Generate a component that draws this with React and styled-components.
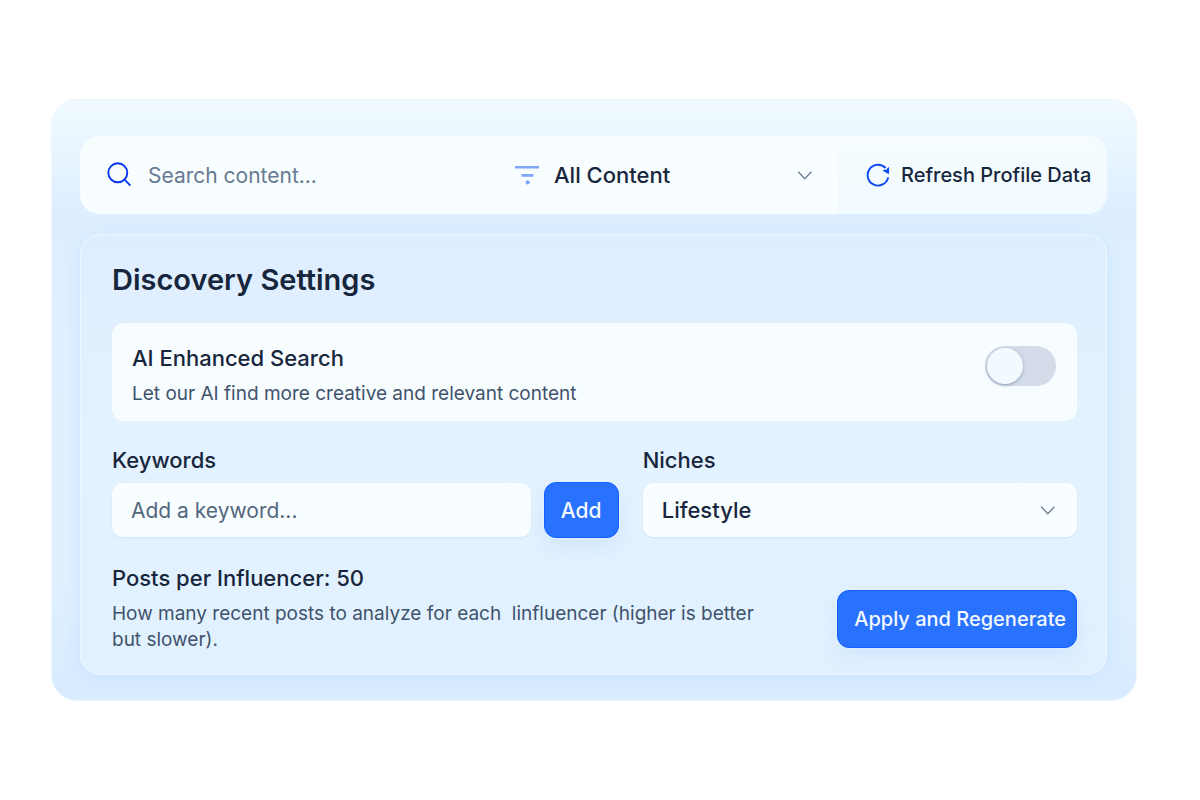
import React, { useState } from 'react'
import styled, { createGlobalStyle } from 'styled-components'

const SearchIcon = () => (
  <Icon width="25" height="26" viewBox="0 0 25 26" stroke="#0a36f0" strokeWidth="1.9">
    <circle cx="10.8" cy="10.8" r="9.5" />
    <path d="M17.6 17.6L23.4 23.6" />
  </Icon>
)

const FilterIcon = () => (
  <Icon width="24" height="20" viewBox="0 0 24 20" stroke="#7ea6fb" strokeWidth="2.6">
    <path d="M0 2.2H24M6.5 10.4H18.5" />
    <circle cx="12.7" cy="17.4" r="2.1" fill="#7ea6fb" stroke="none" />
  </Icon>
)

const RefreshIcon = () => (
  <Icon width="24" height="24" viewBox="0 0 24 24" stroke="#0a48f5" strokeWidth="1.9">
    <path d="M22.2 14.4A10.4 10.4 0 1 1 19.6 5" />
    <path d="M22.6 4.6V10.6L17 7.4L20.4 7.2Z" fill="#0a48f5" strokeWidth="1" />
  </Icon>
)

const ChevronIcon = () => (
  <Icon width="16" height="10" viewBox="0 0 16 10" stroke="#6b7f96" strokeWidth="1.3">
    <path d="M1.2 1.7L7.8 8.7L14.4 1.7" />
  </Icon>
)

const App = () => {
  const [enhanced, setEnhanced] = useState(false)
  const [keyword, setKeyword] = useState('')

  return (
    <Page>
      <GlobalStyle />
      <Panel>
        <Toolbar>
          <SearchField>
            <SearchIcon />
            <SearchInput type="search" placeholder="Search content..." aria-label="Search content" />
          </SearchField>
          <FilterField>
            <FilterIcon />
            <Select aria-label="Filter content">
              <option>All Content</option>
            </Select>
            <ChevronIcon />
          </FilterField>
          <RefreshButton type="button">
            <RefreshIcon />
            Refresh Profile Data
          </RefreshButton>
        </Toolbar>

        <Card>
          <Title>Discovery Settings</Title>

          <ToggleRow>
            <div>
              <Label as="label" htmlFor="enhanced">AI Enhanced Search</Label>
              <Hint>Let our AI find more creative and relevant content</Hint>
            </div>
            <Switch
              id="enhanced"
              type="checkbox"
              role="switch"
              checked={enhanced}
              onChange={e => setEnhanced(e.target.checked)}
            />
          </ToggleRow>

          <Fields>
            <div>
              <Label as="label" htmlFor="keyword">Keywords</Label>
              <KeywordRow>
                <KeywordInput
                  id="keyword"
                  type="text"
                  placeholder="Add a keyword..."
                  value={keyword}
                  onChange={e => setKeyword(e.target.value)}
                />
                <AddButton type="button">Add</AddButton>
              </KeywordRow>
            </div>
            <div>
              <Label as="label" htmlFor="niche">Niches</Label>
              <SelectBox>
                <Select id="niche">
                  <option>Lifestyle</option>
                </Select>
                <ChevronIcon />
              </SelectBox>
            </div>
          </Fields>

          <Footer>
            <Posts>
              <Label>Posts per Influencer: 50</Label>
              <Hint>
                {'How many recent posts to analyze for each  linfluencer (higher is better but slower).'}
              </Hint>
            </Posts>
            <ApplyButton type="button">Apply and Regenerate</ApplyButton>
          </Footer>
        </Card>
      </Panel>
    </Page>
  )
}

export default App

const GlobalStyle = createGlobalStyle`
  * {
    box-sizing: border-box;
  }

  body {
    margin: 0;
    background: #ffffff;
    color: #17263c;
    font-family: Inter, 'Liberation Sans', sans-serif;
  }

  input,
  select,
  button {
    margin: 0;
    font-family: inherit;
    color: inherit;
  }
`

const Icon = styled.svg`
  display: block;
  flex: none;
  fill: none;
  pointer-events: none;
`

const Page = styled.main`
  padding: 99px 63px 99px 51px;
`

const Panel = styled.section`
  display: flex;
  flex-direction: column;
  gap: 20px;
  padding: 36px 29px 25px 28px;
  border: 1px solid #ebf7ff;
  border-radius: 26px;
  overflow: hidden;
  background: linear-gradient(180deg, #f0faff 0, #ebf7ff 36px, #deeeff 110px, #e0f0ff 300px, #e0f0ff 480px, #d8ebff 100%);
`

const Toolbar = styled.div`
  display: grid;
  grid-template-columns: 435fr 323fr 269fr;
  height: 78px;
  border-radius: 20px;
  overflow: hidden;
  background: #f8fdff;
`

const SearchField = styled.div`
  display: flex;
  align-items: center;
  gap: 16px;
  padding-left: 27px;
`

const SearchInput = styled.input`
  flex: 1;
  min-width: 0;
  padding: 0;
  border: 0;
  outline: 0;
  background: transparent;
  font-size: 21px;
  appearance: none;

  &::placeholder {
    color: #667b91;
    opacity: 1;
  }
`

const FilterField = styled.div`
  display: flex;
  align-items: center;
  gap: 15px;
  padding-right: 25px;
`

const Select = styled.select`
  flex: 1;
  min-width: 0;
  margin-right: -31px;
  padding: 0;
  border: 0;
  outline: 0;
  background: transparent;
  font-size: 22px;
  font-weight: 500;
  appearance: none;
`

const RefreshButton = styled.button`
  display: flex;
  align-items: center;
  gap: 11px;
  padding: 0 0 0 28px;
  border: 0;
  background: linear-gradient(180deg, #f6fcff, #f1faff);
  font-size: 20px;
  font-weight: 550;
  white-space: nowrap;
`

const Card = styled.section`
  padding: 27px 29px 21px 31px;
  border: 1px solid #edf7ff;
  border-radius: 20px;
  background: linear-gradient(180deg, #deeeff, #e3f2ff 45%, #e2f1ff);
  box-shadow: 0 2px 16px rgba(175, 215, 255, 0.4);
`

const Title = styled.h1`
  margin: 0;
  font-size: 29px;
  font-weight: 600;
  line-height: 36px;
`

const ToggleRow = styled.div`
  display: flex;
  align-items: flex-start;
  justify-content: space-between;
  min-height: 98px;
  margin-top: 25px;
  padding: 21px 21px 0 20px;
  border-radius: 12px;
  background: #f7fcff;
`

const Label = styled.p`
  display: block;
  margin: 0;
  font-size: 22px;
  font-weight: 550;
  line-height: 28px;
`

const Hint = styled.p`
  margin: 0;
  padding-top: 9px;
  color: #40536c;
  font-size: 19px;
  line-height: 26px;
  white-space: pre-wrap;
`

const Switch = styled.input`
  flex: none;
  width: 71px;
  height: 40px;
  margin-top: 2px;
  padding: 2px;
  border-radius: 20px;
  background: #d3dce8;
  appearance: none;
  cursor: pointer;

  &::before {
    content: '';
    display: block;
    width: 36px;
    height: 36px;
    border-radius: 50%;
    background: #f3faff;
    box-shadow: 0 1px 3px rgba(70, 95, 130, 0.5);
  }

  &:checked {
    background: #2972ff;
  }

  &:checked::before {
    margin-left: auto;
  }
`

const Fields = styled.div`
  display: grid;
  grid-template-columns: 7fr 6fr;
  gap: 24px;
  margin-top: 25px;
`

const KeywordRow = styled.div`
  display: flex;
  align-items: center;
  gap: 13px;
  margin-top: 8px;
`

const KeywordInput = styled.input`
  flex: 1;
  min-width: 0;
  height: 54px;
  padding: 0 19px;
  border: 0;
  border-radius: 10px;
  outline: 0;
  background: #f8fdff;
  box-shadow: 0 1px 2px rgba(160, 200, 240, 0.3);
  font-size: 21px;

  &::placeholder {
    color: #53677e;
    opacity: 1;
  }
`

const SelectBox = styled.div`
  display: flex;
  align-items: center;
  gap: 15px;
  height: 54px;
  margin-top: 9px;
  padding: 0 21px 0 19px;
  border-radius: 10px;
  background: #f8fdff;
  box-shadow: 0 1px 2px rgba(160, 200, 240, 0.3);
`

const BlueButton = styled.button`
  flex: none;
  border: 1px solid #1160ff;
  border-radius: 12px;
  background: #2972ff;
  color: #f3f9ff;
  font-weight: 500;
  white-space: nowrap;
  box-shadow: 0 0 2px #f5fbff, 0 10px 20px rgba(150, 190, 240, 0.2);
`

const AddButton = styled(BlueButton)`
  width: 75px;
  height: 56px;
  font-size: 21px;
`

const ApplyButton = styled(BlueButton)`
  height: 58px;
  margin-bottom: 5px;
  padding: 0 10px 0 16px;
  font-size: 20px;
`

const Footer = styled.div`
  display: flex;
  align-items: flex-end;
  justify-content: space-between;
  margin-top: 26px;
`

const Posts = styled.div`
  max-width: 670px;
`
